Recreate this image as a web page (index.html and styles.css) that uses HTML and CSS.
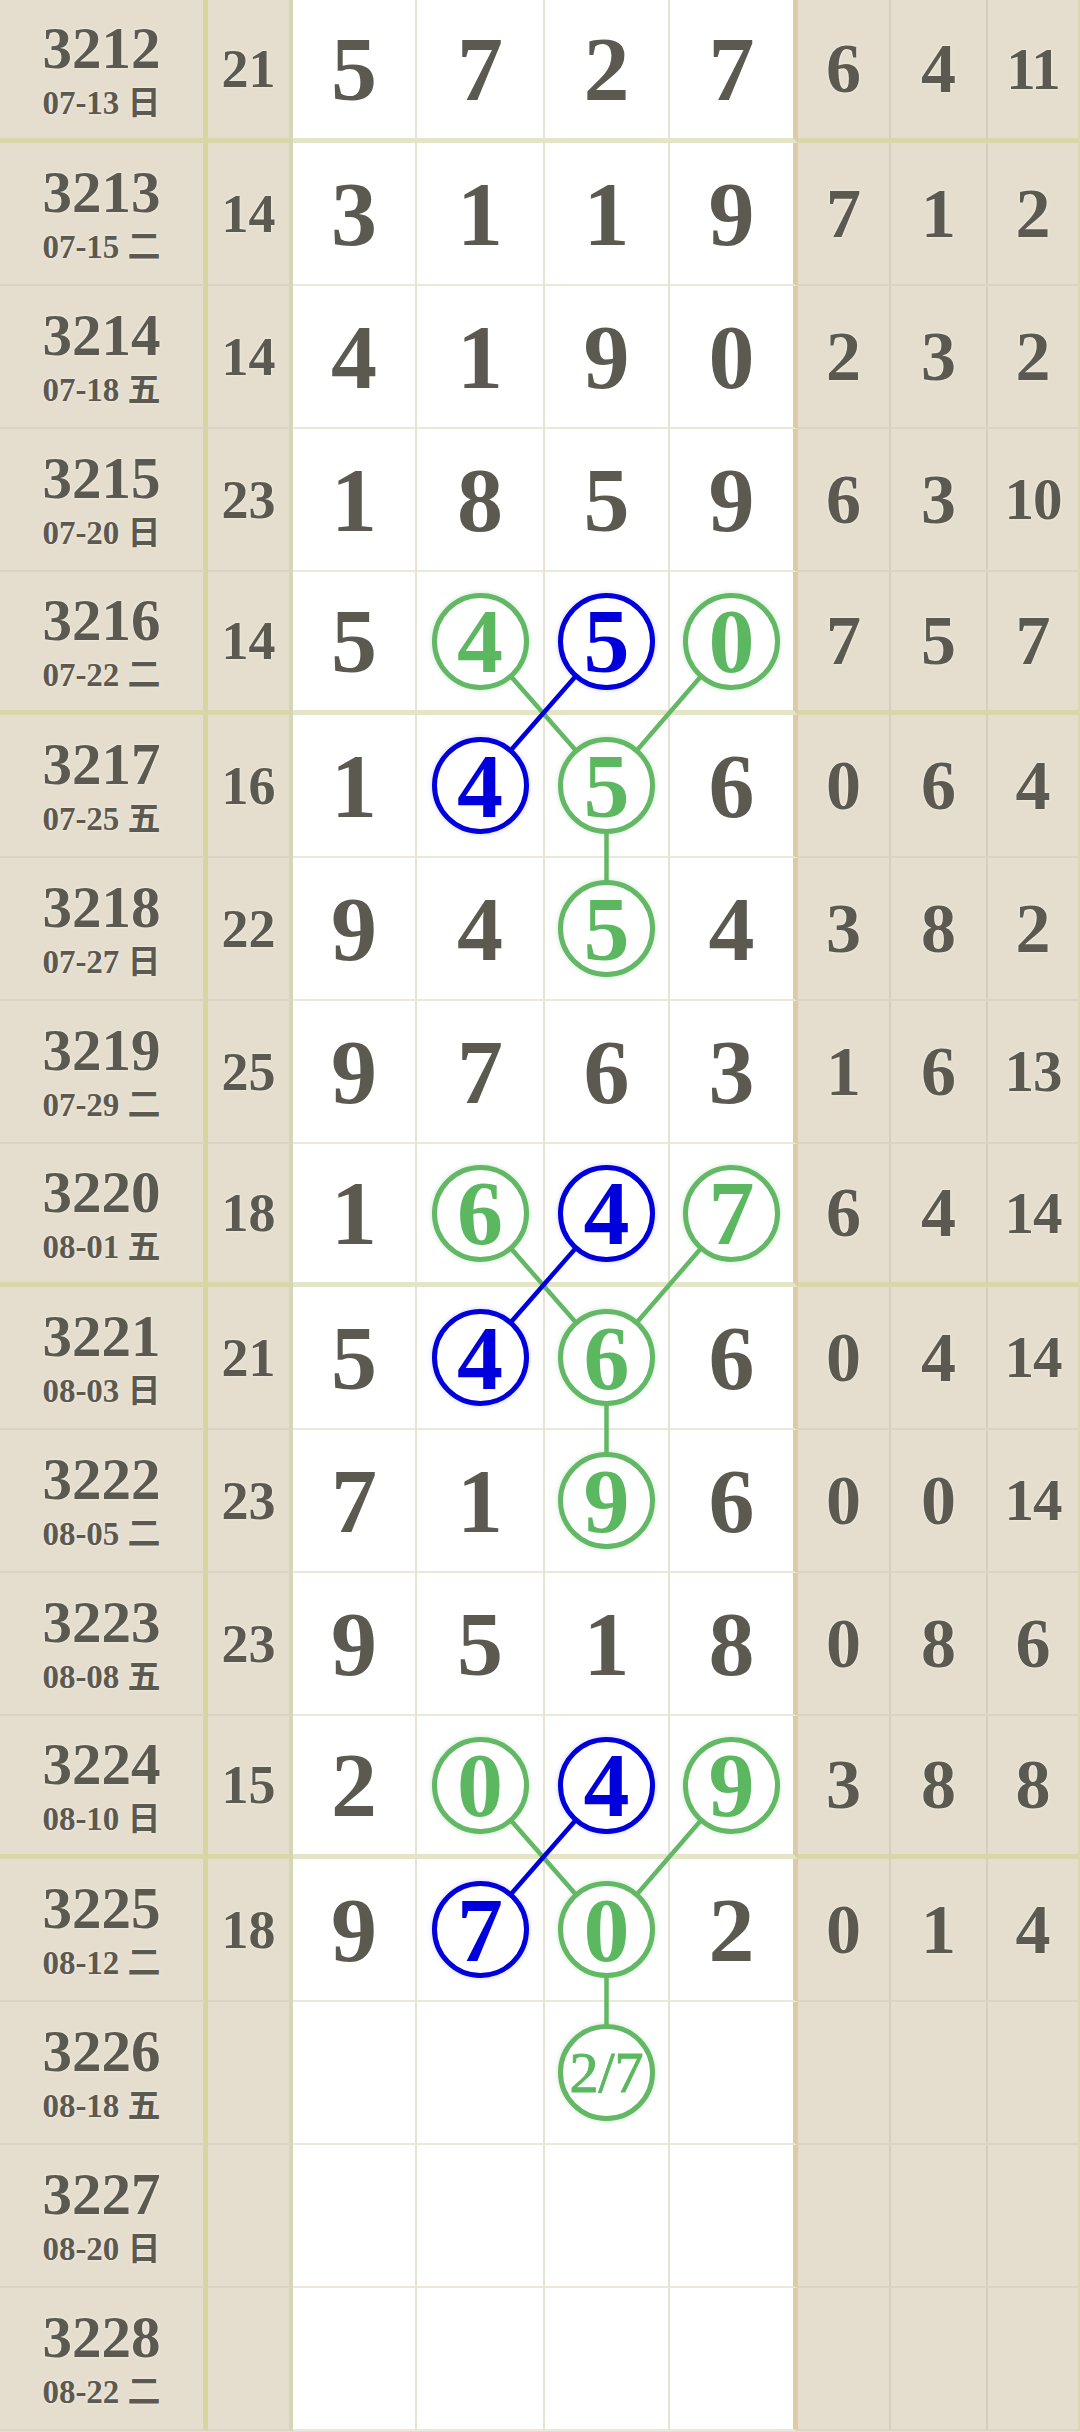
FILE: index.html
```html
<!DOCTYPE html>
<html lang="zh">
<head>
  <meta charset="UTF-8">
  <title>走势图</title>
  <link rel="stylesheet" href="styles.css">
</head>
<body>

<div class="chart">

  <div class="row sep">
    <div class="period"><b>3212</b><span>07-13 日</span></div>
    <div class="sum">21</div>
    <div class="num">5</div><div class="num">7</div><div class="num">2</div><div class="num">7</div>
    <div class="stat">6</div><div class="stat">4</div><div class="stat two">11</div>
  </div>
  <div class="row">
    <div class="period"><b>3213</b><span>07-15 二</span></div>
    <div class="sum">14</div>
    <div class="num">3</div><div class="num">1</div><div class="num">1</div><div class="num">9</div>
    <div class="stat">7</div><div class="stat">1</div><div class="stat">2</div>
  </div>
  <div class="row">
    <div class="period"><b>3214</b><span>07-18 五</span></div>
    <div class="sum">14</div>
    <div class="num">4</div><div class="num">1</div><div class="num">9</div><div class="num">0</div>
    <div class="stat">2</div><div class="stat">3</div><div class="stat">2</div>
  </div>
  <div class="row">
    <div class="period"><b>3215</b><span>07-20 日</span></div>
    <div class="sum">23</div>
    <div class="num">1</div><div class="num">8</div><div class="num">5</div><div class="num">9</div>
    <div class="stat">6</div><div class="stat">3</div><div class="stat two">10</div>
  </div>

  <!-- 3216 - 3218 -->
  <div class="row sep">
    <div class="period"><b>3216</b><span>07-22 二</span></div>
    <div class="sum">14</div>
    <div class="num">5</div>
    <div class="num"><i class="ball">4</i></div>
    <div class="num"><i class="ball blue">5</i></div>
    <div class="num"><i class="ball">0</i></div>
    <div class="stat">7</div><div class="stat">5</div><div class="stat">7</div>
  </div>
  <div class="row">
    <div class="period"><b>3217</b><span>07-25 五</span></div>
    <div class="sum">16</div>
    <div class="num">1</div>
    <div class="num"><i class="ball blue">4</i></div>
    <div class="num"><i class="ball">5</i></div>
    <div class="num">6</div>
    <div class="stat">0</div><div class="stat">6</div><div class="stat">4</div>
  </div>
  <div class="row">
    <div class="period"><b>3218</b><span>07-27 日</span></div>
    <div class="sum">22</div>
    <div class="num">9</div><div class="num">4</div>
    <div class="num"><i class="ball">5</i></div>
    <div class="num">4</div>
    <div class="stat">3</div><div class="stat">8</div><div class="stat">2</div>
  </div>
  <div class="row">
    <div class="period"><b>3219</b><span>07-29 二</span></div>
    <div class="sum">25</div>
    <div class="num">9</div><div class="num">7</div><div class="num">6</div><div class="num">3</div>
    <div class="stat">1</div><div class="stat">6</div><div class="stat two">13</div>
  </div>

  <!-- 3220 - 3222 -->
  <div class="row sep">
    <div class="period"><b>3220</b><span>08-01 五</span></div>
    <div class="sum">18</div>
    <div class="num">1</div>
    <div class="num"><i class="ball">6</i></div>
    <div class="num"><i class="ball blue">4</i></div>
    <div class="num"><i class="ball">7</i></div>
    <div class="stat">6</div><div class="stat">4</div><div class="stat two">14</div>
  </div>
  <div class="row">
    <div class="period"><b>3221</b><span>08-03 日</span></div>
    <div class="sum">21</div>
    <div class="num">5</div>
    <div class="num"><i class="ball blue">4</i></div>
    <div class="num"><i class="ball">6</i></div>
    <div class="num">6</div>
    <div class="stat">0</div><div class="stat">4</div><div class="stat two">14</div>
  </div>
  <div class="row">
    <div class="period"><b>3222</b><span>08-05 二</span></div>
    <div class="sum">23</div>
    <div class="num">7</div><div class="num">1</div>
    <div class="num"><i class="ball">9</i></div>
    <div class="num">6</div>
    <div class="stat">0</div><div class="stat">0</div><div class="stat two">14</div>
  </div>
  <div class="row">
    <div class="period"><b>3223</b><span>08-08 五</span></div>
    <div class="sum">23</div>
    <div class="num">9</div><div class="num">5</div><div class="num">1</div><div class="num">8</div>
    <div class="stat">0</div><div class="stat">8</div><div class="stat">6</div>
  </div>

  <!-- 3224 - 3226 -->
  <div class="row sep">
    <div class="period"><b>3224</b><span>08-10 日</span></div>
    <div class="sum">15</div>
    <div class="num">2</div>
    <div class="num"><i class="ball">0</i></div>
    <div class="num"><i class="ball blue">4</i></div>
    <div class="num"><i class="ball">9</i></div>
    <div class="stat">3</div><div class="stat">8</div><div class="stat">8</div>
  </div>
  <div class="row">
    <div class="period"><b>3225</b><span>08-12 二</span></div>
    <div class="sum">18</div>
    <div class="num">9</div>
    <div class="num"><i class="ball blue">7</i></div>
    <div class="num"><i class="ball">0</i></div>
    <div class="num">2</div>
    <div class="stat">0</div><div class="stat">1</div><div class="stat">4</div>
  </div>
  <div class="row">
    <div class="period"><b>3226</b><span>08-18 五</span></div>
    <div class="sum"></div>
    <div class="num"></div><div class="num"></div>
    <div class="num"><i class="ball frac">2/7</i></div>
    <div class="num"></div>
    <div class="stat"></div><div class="stat"></div><div class="stat"></div>
  </div>
  <div class="row">
    <div class="period"><b>3227</b><span>08-20 日</span></div>
    <div class="sum"></div>
    <div class="num"></div><div class="num"></div><div class="num"></div><div class="num"></div>
    <div class="stat"></div><div class="stat"></div><div class="stat"></div>
  </div>
  <div class="row">
    <div class="period"><b>3228</b><span>08-22 二</span></div>
    <div class="sum"></div>
    <div class="num"></div><div class="num"></div><div class="num"></div><div class="num"></div>
    <div class="stat"></div><div class="stat"></div><div class="stat"></div>
  </div>

  <!-- 连线 -->
  <svg class="links" width="1080" height="2432" viewBox="0 0 1080 2432">
    <g class="g">
      <line x1="480" y1="641" x2="606.5" y2="785.5"/>
      <line x1="731.5" y1="641" x2="606.5" y2="785.5"/>
      <line x1="606.5" y1="785.5" x2="606.5" y2="928.5"/>
      <line x1="480" y1="1213" x2="606.5" y2="1357.5"/>
      <line x1="731.5" y1="1213" x2="606.5" y2="1357.5"/>
      <line x1="606.5" y1="1357.5" x2="606.5" y2="1500.5"/>
      <line x1="480" y1="1785" x2="606.5" y2="1929.5"/>
      <line x1="731.5" y1="1785" x2="606.5" y2="1929.5"/>
      <line x1="606.5" y1="1929.5" x2="606.5" y2="2072.5"/>
    </g>
    <g class="b">
      <line x1="606.5" y1="641" x2="480" y2="785.5"/>
      <line x1="606.5" y1="1213" x2="480" y2="1357.5"/>
      <line x1="606.5" y1="1785" x2="480" y2="1929.5"/>
    </g>
  </svg>

</div>

</body>
</html>
```

FILE: styles.css
```css
body {
  margin: 0;
  padding: 0;
  background: #e5dece;
  color: #5c5a50;
  font-family: 'Liberation Serif', 'Noto Sans CJK SC', serif;
  font-weight: bold;
}
.chart {
  position: relative;
  width: 1080px;
}
.row {
  display: grid;
  grid-template-columns: 208px 85px 124px 128px 125px 128px 93px 97px 92px;
  height: 143px;
}
.row > div {
  box-sizing: border-box;
  display: flex;
  align-items: center;
  justify-content: center;
  line-height: 1;
  border-bottom: 2px solid #dbd4c2;
  text-shadow: 0 0 3px rgba(255, 255, 255, .7);
}

/* 竖线 */
.row > :nth-child(1) { border-right: 5px solid #d8d5a3; }
.row > :nth-child(2) { border-right: 4px solid #d2d7b5; }
.row > :nth-child(3),
.row > :nth-child(4),
.row > :nth-child(5) { border-right: 2px solid #e6e3d5; }
.row > :nth-child(6) { border-right: 5px solid #dfcaa8; }
.row > :nth-child(7),
.row > :nth-child(8) { border-right: 2px solid #d7cfbb; }
.row > :nth-child(9) { border-right: 2px solid #dcd8b4; }

/* 每组分隔线 */
.row.sep > div { border-bottom: 5px solid #d9d6a9; }

.period {
  flex-direction: column;
}
.period b {
  font-size: 59px;
  line-height: 1;
}
.period span {
  font-size: 33px;
  line-height: 1;
  margin-top: 9px;
}
.sum {
  font-size: 54px;
}
.num {
  background: #fff;
  font-size: 92px;
  border-bottom-color: #ebe8d9 !important;
}
.row.sep > .num { border-bottom-color: #e3e5c6 !important; }
.stat {
  font-size: 70px;
}
.stat.two {
  font-size: 59px;
  letter-spacing: -1px;
}

/* 号码圈 */
.ball {
  position: relative;
  z-index: 2;
  box-sizing: border-box;
  width: 97px;
  height: 97px;
  border-radius: 50%;
  border: 5px solid #62b864;
  background: #fff;
  color: #5cb860;
  font-style: normal;
  display: flex;
  align-items: center;
  justify-content: center;
  box-shadow: 0 0 5px rgba(98, 184, 100, .35);
  text-shadow: none;
}
.ball.blue {
  border-color: #0000dc;
  color: #0000dc;
  box-shadow: 0 0 5px rgba(0, 0, 220, .2);
}
.ball.frac {
  font-size: 58px;
  font-weight: normal;
  -webkit-text-stroke: 1px #5cb860;
}

.links {
  position: absolute;
  top: 0;
  left: 0;
  z-index: 1;
  pointer-events: none;
}
.links .g line {
  stroke: #62b864;
  stroke-width: 4.5;
}
.links .b line {
  stroke: #0000dc;
  stroke-width: 4.5;
}
```
